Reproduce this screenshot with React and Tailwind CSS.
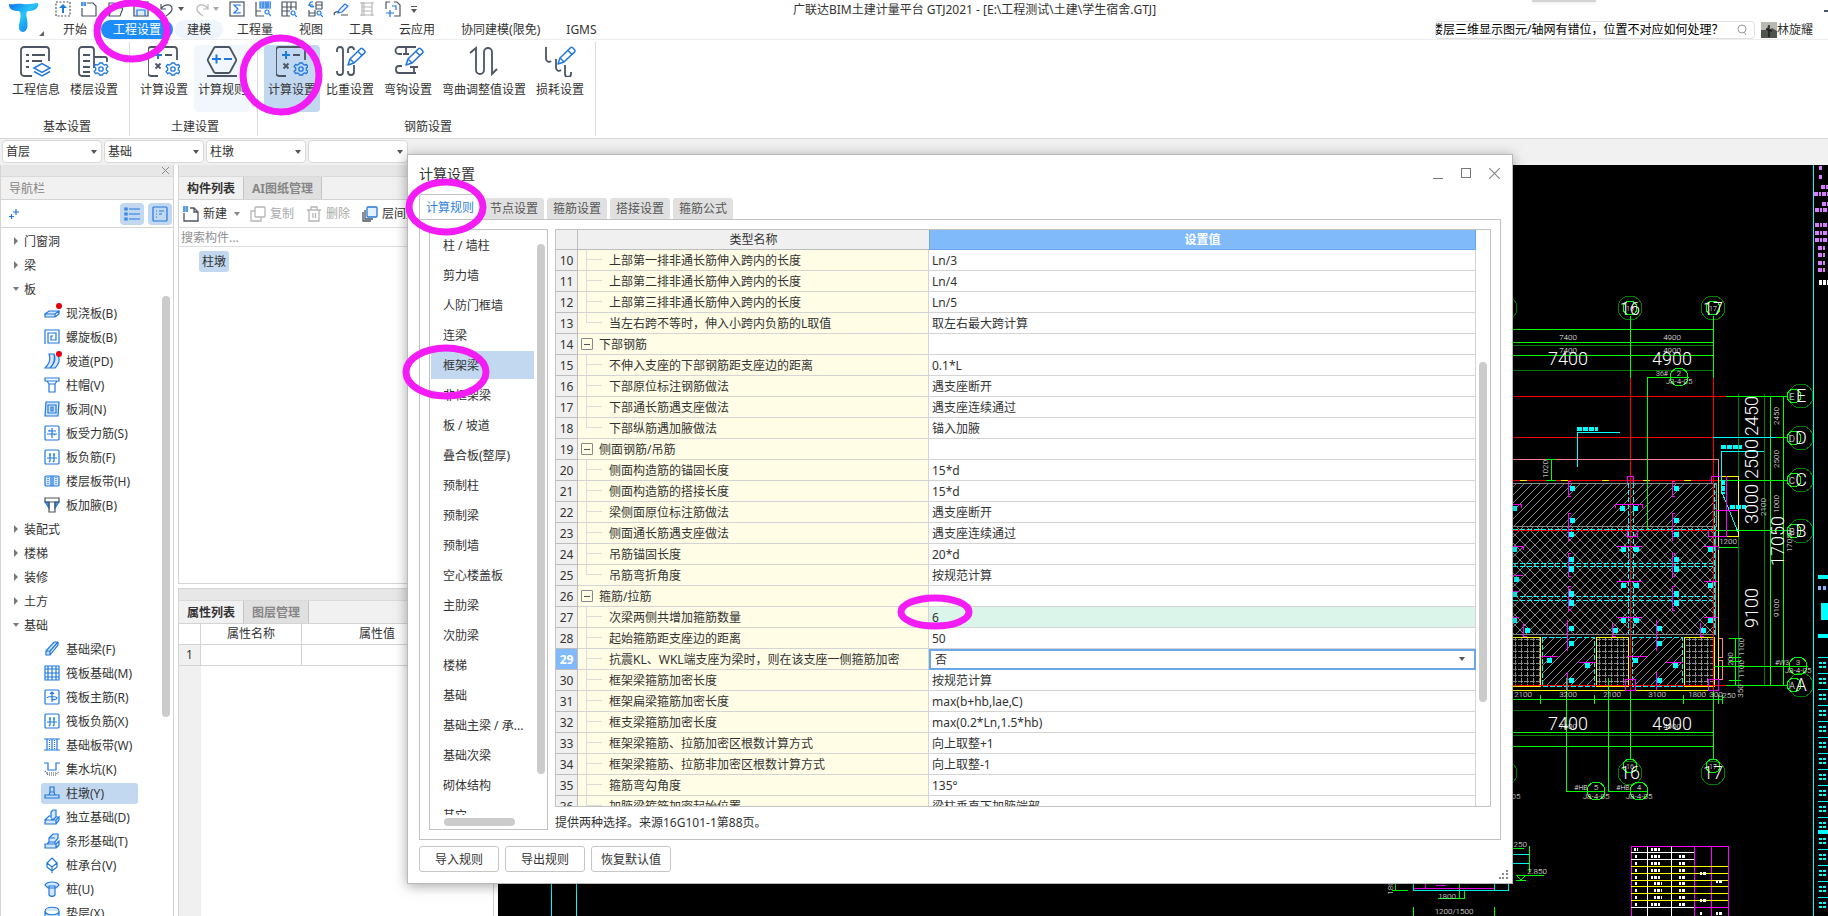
import { useState } from 'react'

const DARK = '#4b5563'
const BLUE = '#1f78e0'

const menuTabs = ['开始', '工程设置', '建模', '工程量', '视图', '工具', '云应用', '协同建模(限免)', 'IGMS']

const ribbonGroups = [
  {
    name: '基本设置',
    items: [
      { label: '工程信息', icon: 'info' },
      { label: '楼层设置', icon: 'floor' },
    ],
  },
  {
    name: '土建设置',
    items: [
      { label: '计算设置', icon: 'calc' },
      { label: '计算规则', icon: 'rule', tone: 'hover' },
    ],
  },
  {
    name: '钢筋设置',
    items: [
      { label: '计算设置', icon: 'calc', tone: 'active' },
      { label: '比重设置', icon: 'weight' },
      { label: '弯钩设置', icon: 'hook' },
      { label: '弯曲调整值设置', icon: 'bend', wide: true },
      { label: '损耗设置', icon: 'loss' },
    ],
  },
]

const navTree = [
  { label: '门窗洞' },
  { label: '梁' },
  {
    label: '板',
    children: [
      { label: '现浇板(B)', icon: 'slab', dot: true },
      { label: '螺旋板(B)', icon: 'spiral' },
      { label: '坡道(PD)', icon: 'ramp', dot: true },
      { label: '柱帽(V)', icon: 'cap' },
      { label: '板洞(N)', icon: 'hole' },
      { label: '板受力筋(S)', icon: 'rebarS' },
      { label: '板负筋(F)', icon: 'rebarF' },
      { label: '楼层板带(H)', icon: 'strip' },
      { label: '板加腋(B)', icon: 'haunch' },
    ],
  },
  { label: '装配式' },
  { label: '楼梯' },
  { label: '装修' },
  { label: '土方' },
  {
    label: '基础',
    children: [
      { label: '基础梁(F)', icon: 'beam' },
      { label: '筏板基础(M)', icon: 'raft' },
      { label: '筏板主筋(R)', icon: 'rebarR' },
      { label: '筏板负筋(X)', icon: 'rebarF' },
      { label: '基础板带(W)', icon: 'stripW' },
      { label: '集水坑(K)', icon: 'sump' },
      { label: '柱墩(Y)', icon: 'pier', selected: true },
      { label: '独立基础(D)', icon: 'isolated' },
      { label: '条形基础(T)', icon: 'footing' },
      { label: '桩承台(V)', icon: 'pilecap' },
      { label: '桩(U)', icon: 'pile' },
      { label: '垫层(X)', icon: 'cushion' },
    ],
  },
]

const categories = [
  '柱 / 墙柱', '剪力墙', '人防门框墙', '连梁', '框架梁', '非框架梁', '板 / 坡道', '叠合板(整厚)', '预制柱', '预制梁',
  '预制墙', '空心楼盖板', '主肋梁', '次肋梁', '楼梯', '基础', '基础主梁 / 承...', '基础次梁', '砌体结构', '其它',
]

const rows = [
  { no: 10, name: '上部第一排非通长筋伸入跨内的长度', value: 'Ln/3' },
  { no: 11, name: '上部第二排非通长筋伸入跨内的长度', value: 'Ln/4' },
  { no: 12, name: '上部第三排非通长筋伸入跨内的长度', value: 'Ln/5' },
  { no: 13, name: '当左右跨不等时，伸入小跨内负筋的L取值', value: '取左右最大跨计算', last: true },
  { no: 14, name: '下部钢筋', group: true },
  { no: 15, name: '不伸入支座的下部钢筋距支座边的距离', value: '0.1*L' },
  { no: 16, name: '下部原位标注钢筋做法', value: '遇支座断开' },
  { no: 17, name: '下部通长筋遇支座做法', value: '遇支座连续通过' },
  { no: 18, name: '下部纵筋遇加腋做法', value: '锚入加腋', last: true },
  { no: 19, name: '侧面钢筋/吊筋', group: true },
  { no: 20, name: '侧面构造筋的锚固长度', value: '15*d' },
  { no: 21, name: '侧面构造筋的搭接长度', value: '15*d' },
  { no: 22, name: '梁侧面原位标注筋做法', value: '遇支座断开' },
  { no: 23, name: '侧面通长筋遇支座做法', value: '遇支座连续通过' },
  { no: 24, name: '吊筋锚固长度', value: '20*d' },
  { no: 25, name: '吊筋弯折角度', value: '按规范计算', last: true },
  { no: 26, name: '箍筋/拉筋', group: true },
  { no: 27, name: '次梁两侧共增加箍筋数量', value: '6', changed: true },
  { no: 28, name: '起始箍筋距支座边的距离', value: '50' },
  { no: 29, name: '抗震KL、WKL端支座为梁时，则在该支座一侧箍筋加密', value: '否', editing: true },
  { no: 30, name: '框架梁箍筋加密长度', value: '按规范计算' },
  { no: 31, name: '框架扁梁箍筋加密长度', value: 'max(b+hb,lae,C)' },
  { no: 32, name: '框支梁箍筋加密长度', value: 'max(0.2*Ln,1.5*hb)' },
  { no: 33, name: '框架梁箍筋、拉筋加密区根数计算方式', value: '向上取整+1' },
  { no: 34, name: '框架梁箍筋、拉筋非加密区根数计算方式', value: '向上取整-1' },
  { no: 35, name: '箍筋弯勾角度', value: '135°' },
  { no: 36, name: '加腋梁箍筋加密起始位置', value: '梁柱垂直下加腋端部' },
]

function Caret({ className = '' }) {
  return (
    <svg width="6" height="4" viewBox="0 0 6 4" className={className}>
      <path d="M0 0h6L3 4z" fill="#555" />
    </svg>
  )
}

function Gear({ x, y }) {
  return (
    <g transform={`translate(${x} ${y})`} stroke={BLUE} strokeWidth="1.3" fill="none" strokeLinejoin="round">
      <path d="M-1.6-6h3.2l.6 1.5 1.6.6 1.5-.8L7-2.4 5.3-1v2L7 2.4 5.3 4.700l-1.500-.8-1.600.6L1.600 6h-3.200l-.6-1.500-1.600-.6-1.500.8L-7 2.400-5.300 1v-2L-7-2.400l1.700-2.300 1.500.8 1.600-.6z" />
      <circle r="2.200" />
    </g>
  )
}

function Pencil({ x, y }) {
  return (
    <g transform={`translate(${x} ${y})`} stroke={BLUE} strokeWidth="1.500" fill="none" strokeLinejoin="round">
      <path d="M0 17l2-6L12.500.8c.6-.6 1.500-.6 2.100 0l2 2c.6.6.6 1.500 0 2.100L6 15z" />
      <path d="M10 3.500l4 4M2 11l4 4" />
    </g>
  )
}

function RibbonIcon({ name }) {
  const frame = 'M12 31H5a3 3 0 0 1-3-3V5a3 3 0 0 1 3-3h23a3 3 0 0 1 3 3v10'
  return (
    <svg width="32" height="32" viewBox="0 0 32 32" fill="none" stroke={DARK} strokeWidth="1.800">
      {name === 'info' && (
        <>
          <path d="M12 31H4a3 3 0 0 1-3-3V5a3 3 0 0 1 3-3h22a3 3 0 0 1 3 3v11" />
          <path d="M6 10h3M12 10h13M6 16h3M12 16h10M6 22h3" />
          <path d="M14 23l8-4.500 8 4.500-8 4.500zM14 26.500l8 4.500 8-4.500" stroke={BLUE} strokeWidth="1.500" />
        </>
      )}
      {name === 'floor' && (
        <>
          <path d="M12 31H4a3 3 0 0 1-3-3V5a3 3 0 0 1 3-3h9a3 3 0 0 1 3 3v18M16 12h11a2 2 0 0 1 2 2v3" />
          <path d="M5 10h7M5 16h7M5 22h7M5 27h7" />
          <Gear x={23} y={24} />
        </>
      )}
      {name === 'calc' && (
        <>
          <path d={frame} transform="translate(-2 0)" />
          <path d="M6 10h8M10 6v8" stroke={BLUE} strokeWidth="2" />
          <path d="M17 10h7M7.500 18.500l5 5M12.500 18.500l-5 5" />
          <Gear x={25} y={24} />
        </>
      )}
      {name === 'rule' && (
        <>
          <path d="M10 2h12a2 2 0 0 1 2 1l6 11a2 2 0 0 1 0 2l-6 11a2 2 0 0 1-2 1H10a2 2 0 0 1-2-1L2 16a2 2 0 0 1 0-2L8 3a2 2 0 0 1 2-1zM1 31h30" />
          <path d="M6 14h9M10.500 9.500v9M18 14h8" stroke={BLUE} strokeWidth="2" />
        </>
      )}
      {name === 'weight' && (
        <>
          <path d="M3 7V5a3 3 0 0 1 6 0v22a3 3 0 0 1-6 0v-1M14 8V5a3 3 0 0 1 6 0M14 26v1a3 3 0 0 0 6 0v-7" />
          <Pencil x={14} y={3} />
        </>
      )}
      {name === 'hook' && (
        <>
          <path d="M24 2H7a3 3 0 0 0 0 7h3M14 3v6M11 9h6M10 21H7a3 3 0 0 0-3 3v1a3 3 0 0 0 3 3h17M22 22v7M18 22h8" />
          <Pencil x={14} y={3} />
        </>
      )}
      {name === 'bend' && <path d="M2 8l6-5v22a4 4 0 0 0 8 0V7a4 4 0 0 1 8 0v22l5-5" />}
      {name === 'loss' && (
        <>
          <path d="M2 2v12a3 3 0 0 0 5 2M12 14v9a3 3 0 0 0 5 2M21 20v9a3 3 0 0 0 6 0v-2" />
          <Pencil x={14} y={2} />
        </>
      )}
    </svg>
  )
}

function TreeIcon({ name }) {
  return (
    <svg width="16" height="16" viewBox="0 0 16 16" fill="none" stroke={BLUE} strokeWidth="1.200">
      {name === 'slab' && <path d="M1 9l4-3h10l-4 3zM1 9v3h10V9M11 12l4-3V6" fill="#d5e6fa" />}
      {name === 'spiral' && <path d="M1 15V1h14v13H4V4h8v7H7V7h2" />}
      {name === 'ramp' && <path d="M5 1c2 5 0 10-4 14h5c4-4 5-9 4-14zM10 1c2 5 0 10-4 14h5c4-4 5-9 3-13" fill="#d5e6fa" />}
      {name === 'cap' && <path d="M1 1h14v3H1zM3 4l2 3h6l2-3M5 7v8h6V7" />}
      {name === 'hole' && <path d="M2 1h13l-1 14H1zM4 4h8v8H4zM7 6h2v4H7z" fill="#d5e6fa" />}
      {name === 'rebarS' && (
        <>
          <rect x="1" y="1" width="14" height="14" rx="1" />
          <path d="M4 6h8M3 9h10M8 3v10M6 5l-1 1M10 9l1 1" />
        </>
      )}
      {name === 'rebarF' && (
        <>
          <rect x="1" y="1" width="14" height="14" rx="1" />
          <path d="M3 9h10M6 4v8l-1 1M10 4v8l-1 1M5 6h2M9 6h2" />
        </>
      )}
      {name === 'rebarR' && (
        <>
          <rect x="1" y="1" width="14" height="14" rx="1" />
          <path d="M3 9c1-2 9-2 10 0-1 2-4 2-5 1M8 3v10M6 5l2-2 2 2" />
        </>
      )}
      {name === 'strip' && (
        <>
          <rect x="1" y="3" width="14" height="10" rx="1" fill="#d5e6fa" />
          <path d="M4 4v8M12 4v8" strokeDasharray="1 1" />
          <path d="M7 3v10M9 3v10" />
        </>
      )}
      {name === 'haunch' && (
        <>
          <path d="M1 5l4 6V5zM15 5l-4 6V5z" fill="#4d95ea" />
          <path d="M1 1h14v4H1zM5 5v10h6V5" stroke={DARK} />
        </>
      )}
      {name === 'beam' && <path d="M2 10L10 1h4v3L6 14H2zM2 10h4v4M6 10l8-9" fill="#d5e6fa" />}
      {name === 'raft' && <path d="M1 1h14v14H1zM4 1v14M8 1v14M12 1v14M1 4h14M1 8h14M1 12h14" />}
      {name === 'stripW' && (
        <>
          <path d="M0 2h16M0 13h16M3 2v11M8 2v11M13 2v11" />
          <path d="M5.500 3v10M10.500 3v10" strokeDasharray="1 1" />
        </>
      )}
      {name === 'sump' && (
        <>
          <path d="M0 2h4v7h8V2h4" />
          <path d="M1 10l3 4h8l3-4M3 12h10" stroke={DARK} strokeDasharray="1 1" />
        </>
      )}
      {name === 'pier' && <path d="M1 10h14v3H1zM5 10l1-3h4l1 3M6 7V2h4v5" />}
      {name === 'isolated' && <path d="M1 11h11v4H1zM1 11l4-4h2M12 11l3-3v3l-3 4M7 9V3l2-2h3v7l-2 2H7M12 8l3 0" fill="#d5e6fa" />}
      {name === 'footing' && <path d="M1 11h11v4H1zM12 11l3-3v4l-3 3M3 11l2-2V5l4-4h5v4l-3 4v2M5 5h6M5 9h6" fill="#d5e6fa" />}
      {name === 'pilecap' && <path d="M8 1l5 5-5 4-5-4zM3 6v4l5 4 5-4V6M8 10v6" />}
      {name === 'pile' && <path d="M1 4c2-4 12-4 14 0l-3 3H4zM5 5h6v9c-2 2-4 2-6 0z" fill="#d5e6fa" />}
      {name === 'cushion' && <path d="M1 6c0-5 14-5 14 0s-14 5-14 0v7c0 5 14 5 14 0V6" fill="#d5e6fa" />}
    </svg>
  )
}

const quickPaths = {
  上传: <><rect x="1" y="1" width="14" height="14" strokeDasharray="2 1.500" /><path d="M8 3L4 7h3v5h2V7h3z" fill={BLUE} stroke="none" /></>,
  新建: <><path d="M6 2h6l3 3v10H1V7" /><path d="M0 2h5M0 4h5M1 1v4M4 1v4" stroke={BLUE} /></>,
  打开: <path d="M2 15V2h5l2 2h5v3M2 15l3-8h11l-3 8z" />,
  保存: <><path d="M1 1h14v14H1z" /><path d="M4 1v4h8V1M4 15V9h8v6" stroke={BLUE} /></>,
  撤销: <path d="M2 3v5h5M2 8c3-5 11-6 11 0 0 4-4 5-6 7" />,
  恢复: <path d="M14 3v5H9M14 8C11 3 3 2 3 8c0 4 4 5 6 7" stroke="#b8b8b8" />,
  汇总: <><rect x="1" y="1" width="14" height="14" /><path d="M11 5V4H5l4 4-4 4h6v-1" stroke={BLUE} /></>,
  查看钢筋: <><path d="M1 1v14h8M1 10h5" /><path d="M5 1h11v6H5zM5 3h11M5 5h11M8 1v6M11 1v6M13 1v6M12 9a2 2 0 1 0 .1 0M14 13l2 2" stroke={BLUE} /></>,
  查看表格: <><path d="M9 15H1V1h14v8M1 6h14M1 10h8M6 1v14M10 1v8" /><path d="M12 10a2 2 0 1 0 .1 0M14 14l2 2" stroke={BLUE} /></>,
  查看工程量: <><path d="M9 1h6v7M9 1v7h6M9 4h6M2 9v6h6M2 12h6M8 9v6" /><path d="M6 1a2.500 2.500 0 1 0 1 4M1 4h5M12 10a2 2 0 1 0 .1 0M14 14l2 2" stroke={BLUE} /></>,
  编辑: <><path d="M2 14c-3-2 2-4 4-3M8 14h7" /><path d="M5 12l1-3 6-6 3 2-6 6z" stroke={BLUE} /></>,
  栅格: <path d="M3 1v14M13 1v14M1 2h14M3 6h10M3 10h10M1 14h14M5 1v14" stroke="#b8b8b8" />,
  提取: <><path d="M1 8V1h4M9 1h3l3 3v11H9" /><path d="M5 9v7M1 12h8M7 5h4v4" stroke={BLUE} /></>,
}

function QuickButton({ name, className = '' }) {
  return (
    <button aria-label={name} className={`h-4 w-4 shrink-0 ${className}`}>
      <svg width="16" height="16" viewBox="0 0 16 16" fill="none" stroke={DARK} strokeWidth="1.200">
        {quickPaths[name]}
      </svg>
    </button>
  )
}

function Header() {
  return (
    <header className="flex h-10 shrink-0 border-b border-[#eeeeee] bg-white">
      <div className="flex w-[51px] shrink-0 items-start pt-[3px] pl-[9px]">
        <svg width="30" height="29" viewBox="0 0 30 29">
          <defs>
            <linearGradient id="logo" x1="0" y1="0" x2="1" y2="1">
              <stop offset="0" stopColor="#0a6ff0" />
              <stop offset=".45" stopColor="#27c6f7" />
              <stop offset="1" stopColor="#0b62ee" />
            </linearGradient>
          </defs>
          <path d="M0 1c4 1 8-1 14 0 6 1 10-1 15-1 1 4-2 8-9 8-3 0-3 3-2 8 1 6 1 12-4 13-6-1-4-7-3-12 1-5 1-9-2-9C3 8 0 6 0 1z" fill="url(#logo)" />
        </svg>
        <svg width="5" height="5" viewBox="0 0 5 5" className="mt-7 shrink-0">
          <path d="M5 0v5H0z" fill="#666" />
        </svg>
      </div>
      <div className="flex min-w-0 flex-1 flex-col">
        <div className="flex h-5 items-start">
          <div className="flex shrink-0 items-center gap-[10px] pt-px pl-1">
            <QuickButton name="上传" />
            <QuickButton name="新建" />
            <QuickButton name="打开" />
            <QuickButton name="保存" className="bg-[#e0ebf9]" />
            <span className="flex w-[25px] items-center justify-between"><QuickButton name="撤销" /><Caret /></span>
            <span className="flex w-[25px] items-center justify-between"><QuickButton name="恢复" /><Caret className="opacity-50" /></span>
            <QuickButton name="汇总" />
            <QuickButton name="查看钢筋" />
            <QuickButton name="查看表格" />
            <QuickButton name="查看工程量" />
            <QuickButton name="编辑" />
            <QuickButton name="栅格" />
            <QuickButton name="提取" />
            <svg width="6" height="7" viewBox="0 0 6 7">
              <path d="M0 0h6v1H0zM0 3h6L3 7z" fill="#555" />
            </svg>
          </div>
          <h1 className="flex-1 text-center leading-5 whitespace-nowrap">广联达BIM土建计量平台 GTJ2021 - [E:\工程测试\土建\学生宿舍.GTJ]</h1>
          <div className="flex h-full w-[296px] items-start justify-between">
            <div className="h-0.5 w-16 bg-[#d4d4d4] shadow" />
            <button aria-label="最小化" className="mt-2.5 h-0.5 w-1 bg-gray-600" />
          </div>
        </div>
        <div className="flex h-[19px] items-center justify-between pr-[15px]">
          <nav className="flex items-center gap-0.5">
            {menuTabs.map((t) => (
              <button
                key={t}
                className={`h-[19px] rounded-full px-3 leading-5 whitespace-nowrap ${
                  t === '工程设置' ? 'bg-[#1b8cfa] text-white' : t === '建模' ? 'bg-[#eff5fd]' : ''
                }`}
              >
                {t}
              </button>
            ))}
          </nav>
          <div className="flex items-center gap-1.5">
            <label className="flex h-[18px] w-80 items-center justify-end overflow-hidden rounded-sm border border-[#e0e0e0] bg-white">
              <input
                aria-label="搜索"
                defaultValue="楼层三维显示图元/轴网有错位，位置不对应如何处理？"
                className="w-[305px] shrink-0 pt-px text-black outline-none"
              />
              <svg width="12" height="12" viewBox="0 0 12 12" className="mr-1.5 shrink-0" fill="none" stroke="#999">
                <circle cx="6" cy="5" r="4" />
                <path d="M8.500 8.500L10 11" />
              </svg>
            </label>
            <div className="flex items-center">
              <svg width="16" height="16" viewBox="0 0 16 16">
                <rect width="16" height="16" fill="#b9b9b4" />
                <path d="M0 8h5l2-4 1 4 3-2 5 3v7H0z" fill="#50544e" />
                <path d="M8 3v12M5 7l6 2" stroke="#1e1e1e" strokeWidth="1.500" />
              </svg>
              <span className="leading-5">林旋耀</span>
            </div>
          </div>
        </div>
      </div>
    </header>
  )
}

function Ribbon() {
  return (
    <section className="flex h-[98px] shrink-0 bg-white pl-0.5">
      {ribbonGroups.map((g) => (
        <div key={g.name} className="my-0.5 flex flex-col items-center border-r border-[#dcdcdc] pr-[7px] pl-1.5">
          <div className="mt-[3px] flex gap-0.5">
            {g.items.map((item) => (
              <button
                key={item.label}
                className={`flex h-[67px] flex-col items-center rounded-sm whitespace-nowrap ${item.wide ? 'w-[92px]' : 'w-14'} ${
                  item.tone === 'active' ? 'bg-[#c1d8f0]' : item.tone === 'hover' ? 'bg-[#f2f7fd]' : ''
                }`}
              >
                <RibbonIcon name={item.icon} />
                <span className="mt-[5px]">{item.label}</span>
              </button>
            ))}
          </div>
          <span className="mt-[7px] pl-1">{g.name}</span>
        </div>
      ))}
    </section>
  )
}

function ComboBar() {
  return (
    <div className="flex h-[27px] shrink-0 items-start gap-0.5 border-t border-[#d6d6d6] bg-[#f1f1f1] pt-px pl-0.5">
      {['首层', '基础', '柱墩', ''].map((v, i) => (
        <div key={i} className="relative">
          <select
            aria-label={['楼层', '类别', '构件类型', '构件'][i]}
            className="h-[23px] w-[100px] appearance-none rounded-sm border border-[#d9d9d9] bg-white pl-[3px] text-xs outline-none"
          >
            <option>{v}</option>
          </select>
          <Caret className="pointer-events-none absolute top-2.5 right-[5px]" />
        </div>
      ))}
    </div>
  )
}

function NavPanel() {
  return (
    <aside className="flex w-[174px] shrink-0 flex-col border-x border-[#d4d4d4] bg-white">
      <div className="flex h-3 items-center justify-end border-b border-[#dadada] bg-[#e7e7e7] pr-1">
        <button aria-label="关闭导航栏">
          <svg width="7" height="7" viewBox="0 0 7 7" stroke="#888"><path d="M0 0l7 7M7 0L0 7" /></svg>
        </button>
      </div>
      <h2 className="h-[23px] border-b border-[#d4d4d4] bg-[#f1f1f1] pl-2 leading-[23px] text-[#858585]">导航栏</h2>
      <div className="flex h-7 items-center gap-1 border-b border-[#d4d4d4] pr-px">
        <button aria-label="新增" className="mr-auto ml-2">
          <svg width="10" height="10" viewBox="0 0 10 10" stroke={BLUE} strokeWidth="1.200"><path d="M4 3h6M7 0v6M0 7.500h5M2.500 5v5" /></svg>
        </button>
        <button aria-label="列表" className="flex h-[22px] w-6 items-center justify-center rounded bg-[#c1d8f0]">
          <svg width="16" height="14" viewBox="0 0 16 14" fill="none" stroke={BLUE} strokeWidth="1.200">
            <path d="M5 2h11M5 7h11M5 12h11M1 1h2v2H1zM1 6h2v2H1zM1 11h2v2H1z" />
          </svg>
        </button>
        <button aria-label="详情" className="flex h-[22px] w-6 items-center justify-center rounded bg-[#c1d8f0]">
          <svg width="16" height="16" viewBox="0 0 16 16" fill="none" stroke={BLUE} strokeWidth="1.200">
            <rect x="1" y="1" width="14" height="14" rx="1" />
            <path d="M4 5h1M7 5h5M4 8h1M7 8h3M4 11h1" />
          </svg>
        </button>
      </div>
      <div className="relative min-h-0 flex-1 overflow-hidden pt-px">
        <ul>
          {navTree.map((n) => (
            <li key={n.label}>
              <div className="flex h-6 items-center pl-3">
                <svg width="6" height="8" viewBox="0 0 6 8" className="mr-[5px]">
                  <path d={n.children ? 'M0 2h6L3 6z' : 'M1 0v8l4-4z'} fill="#777" />
                </svg>
                <span className="pt-0.5">{n.label}</span>
              </div>
              {n.children && (
                <ul>
                  {n.children.map((c) => (
                    <li key={c.label} className="flex h-6 items-center pl-10">
                      <div className={`relative flex h-[21px] w-[97px] items-center gap-1.5 rounded-[3px] pl-[3px] whitespace-nowrap ${c.selected ? 'bg-[#c1d8f0]' : ''}`}>
                        <TreeIcon name={c.icon} />
                        {c.dot && <i className="absolute top-0 left-[15px] h-1.5 w-1.5 rounded-full bg-red-600" />}
                        <span className="pt-0.5">{c.label}</span>
                      </div>
                    </li>
                  ))}
                </ul>
              )}
            </li>
          ))}
        </ul>
        <div className="absolute top-[68px] right-[3px] h-[421px] w-2 rounded-full bg-[#cbcbcb]" />
      </div>
    </aside>
  )
}

function PanelTabs({ tabs }) {
  return (
    <div className="flex h-[23px] border-b border-[#d4d4d4] bg-[#f1f1f1] font-bold">
      {tabs.map((t, i) => (
        <button key={t} className={`border-r border-[#c4c4c4] px-2 leading-[22px] ${i === 0 ? 'text-[#333]' : 'bg-[#e0e0e0] text-[#868686]'}`}>
          <span className="block pt-px">{t}</span>
        </button>
      ))}
    </div>
  )
}

function ComponentPanel() {
  return (
    <div className="flex w-[316px] shrink-0 flex-col">
      <section className="flex h-[419px] flex-col border border-t-0 border-[#d4d4d4] bg-white">
        <div className="h-3 border-b border-[#dadada] bg-[#e7e7e7]" />
        <PanelTabs tabs={['构件列表', 'AI图纸管理']} />
        <div className="flex h-7 items-center overflow-hidden border-b border-[#dedede] pl-1 whitespace-nowrap">
          <button className="flex items-center gap-1">
            <svg width="16" height="16" viewBox="0 0 16 16" fill="none" stroke={DARK} strokeWidth="1.300">
              <path d="M7 2h4l4 4v9H1V7M11 2v4h4" />
              <path d="M0 1h5M0 3h5M0 5h5M1 0v6M4 0v6" stroke={BLUE} strokeWidth="1" />
            </svg>
            <span className="pt-px">新建</span>
          </button>
          <Caret className="ml-[7px] opacity-70" />
          <button disabled className="ml-[10px] flex items-center gap-1 text-[#aaa]">
            <svg width="16" height="16" viewBox="0 0 16 16" fill="none" stroke="#b5b5b5" strokeWidth="1.300">
              <rect x="5" y="1" width="10" height="10" rx="1" />
              <path d="M5 5H1v10h10v-4" />
            </svg>
            <span className="pt-px">复制</span>
          </button>
          <button disabled className="ml-3 flex items-center gap-1 text-[#aaa]">
            <svg width="16" height="16" viewBox="0 0 16 16" fill="none" stroke="#b5b5b5" strokeWidth="1.300">
              <path d="M1 4h14M5 4V1h6v3M3 4v11h10V4M7 7v5M9.500 7v5" />
            </svg>
            <span className="pt-px">删除</span>
          </button>
          <button className="ml-3 flex items-center gap-1">
            <svg width="16" height="16" viewBox="0 0 16 16" fill="none" stroke={DARK} strokeWidth="1.300">
              <path d="M3 4v9h8M1 6v9h8" />
              <rect x="5" y="1" width="10" height="10" rx="1" stroke={BLUE} fill="#e6f0fc" />
            </svg>
            <span className="pt-px">层间复制</span>
          </button>
        </div>
        <input aria-label="搜索构件" placeholder="搜索构件..." className="h-[19px] border-b border-[#dedede] pl-0.5 outline-none placeholder:text-[#8f8f8f]" />
        <div className="pt-1 pl-5">
          <button className="h-[21px] rounded-[3px] bg-[#c1d8f0] px-[3px]">柱墩</button>
        </div>
      </section>
      <section className="mt-1 flex flex-1 flex-col border border-b-0 border-[#d4d4d4] bg-white">
        <div className="h-3 border-b border-[#dadada] bg-[#e7e7e7]" />
        <PanelTabs tabs={['属性列表', '图层管理']} />
        <table className="w-full table-fixed border-separate border-spacing-0">
          <thead>
            <tr className="[&>th]:h-[21px] [&>th]:border-r [&>th]:border-b [&>th]:border-[#d4d4d4] [&>th]:p-0 [&>th]:font-normal">
              <th className="w-[22px]" />
              <th className="w-[101px]">属性名称</th>
              <th>属性值</th>
              <th className="w-10">附加</th>
            </tr>
          </thead>
          <tbody>
            <tr className="[&>td]:h-[21px] [&>td]:border-r [&>td]:border-b [&>td]:border-[#d4d4d4] [&>td]:p-0">
              <td className="bg-[#f0f0f0] text-center">1</td>
              <td />
              <td />
              <td />
            </tr>
          </tbody>
        </table>
        <div className="w-[22px] flex-1 bg-[#f0f0f0]" />
      </section>
    </div>
  )
}

// [x, y, text, size, rotate]
const cadTexts = [
  [1568, 340, '7400', 8], [1672, 340, '4900', 8], [1568, 353, '7400', 8], [1672, 353, '4900', 8],
  [1568, 365, '7400', 18], [1672, 365, '4900', 18], [1568, 730, '7400', 18], [1672, 730, '4900', 18],
  [1568, 729, '7400', 8], [1672, 729, '4900', 8],
  [1630, 315, '16', 18], [1713, 315, '17', 18], [1630, 779, '16', 18], [1713, 779, '17', 18],
  [1630, 311, '16', 7], [1713, 311, '17', 7], [1630, 769, '16', 7], [1713, 769, '17', 7],
  [1679, 376, '2', 8], [1679, 384, 'J8-4-05', 8], [1662, 376, '36#', 7],
  [1596, 790, '5', 8], [1596, 799, 'J8-4-05', 8], [1581, 790, '#HB', 7],
  [1639, 790, '4', 8], [1639, 799, 'J8-4-05', 8], [1623, 790, '#HB', 7], [1516, 799, '05', 8],
  [1798, 665, '3', 8], [1798, 673, 'J8-4-05', 8], [1782, 665, '#W3', 7],
  [1758, 416, '2450', 18, 1], [1758, 459, '2500', 18, 1], [1758, 504, '3000', 18, 1],
  [1784, 541, '17050', 18, 1], [1758, 608, '9100', 18, 1],
  [1779, 416, '2450', 8, 1], [1779, 459, '2500', 8, 1], [1779, 504, '1000', 8, 1], [1766, 507, '2100', 8, 1],
  [1779, 608, '9100', 8, 1], [1792, 541, '17050', 8, 1], [1548, 469, '1020', 8, 1],
  [1744, 647, '1100', 8, 1], [1733, 659, '200', 8, 1], [1744, 669, '1100', 8, 1], [1743, 691, '350', 8, 1],
  [1728, 544, '1200', 8], [1523, 697, '2100', 8], [1568, 697, '3200', 8], [1612, 697, '2100', 8],
  [1657, 697, '3100', 8], [1697, 697, '1800', 8], [1716, 697, '300', 8], [1729, 698, '250', 8],
  [1518, 847, '1250', 8], [1537, 874, '2.850', 8], [1447, 899, '1800', 8], [1454, 914, '1200/1500', 8],
  [1393, 888, '180', 8, 1],
]

const axes = [['E', 396], ['D', 438], ['C', 480], ['B', 531], ['A', 685]]

const blobs = [
  [1572, 488], [1676, 488], [1572, 520], [1676, 520], [1622, 508], [1635, 508], [1514, 508],
  [1571, 534], [1676, 534], [1623, 549], [1636, 549], [1710, 549], [1514, 549],
  [1571, 559], [1676, 559], [1571, 569], [1676, 569], [1516, 579], [1623, 585], [1636, 585], [1710, 585],
  [1571, 593], [1676, 593], [1571, 603], [1676, 603], [1514, 594], [1623, 620], [1636, 620], [1710, 620], [1514, 620],
  [1527, 630], [1571, 628], [1615, 630], [1659, 628], [1703, 630], [1571, 643], [1659, 643],
  [1549, 660], [1587, 665], [1635, 660], [1675, 665], [1571, 680], [1659, 680],
]

const purpleNotes = [[1819, 166, 3], [1819, 175, 3], [1821, 185, 7], [1814, 192, 14], [1822, 202, 6], [1815, 208, 13], [1815, 223, 13], [1815, 231, 13], [1815, 238, 12], [1818, 246, 7], [1818, 253, 7], [1818, 261, 7], [1818, 268, 7]]

function Cad() {
  const notes = Array.from({ length: 16 }, (_, i) => 657 + i * 16)
  return (
    <svg
      viewBox="498 165 1330 751"
      preserveAspectRatio="xMaxYMin slice"
      className="h-full w-full bg-black"
      fill="none"
      strokeWidth="1"
      shapeRendering="crispEdges"
      role="img"
      aria-label="结构平面图"
    >
      <defs>
        <pattern id="diag" width="8" height="8" patternUnits="userSpaceOnUse">
          <path d="M0 8L8 0" stroke="#8a8a8a" />
        </pattern>
        <pattern id="cross" width="10" height="10" patternUnits="userSpaceOnUse">
          <path d="M0 10L10 0M0 0l10 10" stroke="#8a8a8a" />
        </pattern>
        <pattern id="grid" width="6" height="6" patternUnits="userSpaceOnUse">
          <path d="M0 3h5M3 0v5" stroke="#8a8a8a" />
        </pattern>
      </defs>

      <rect x="1500" y="483" width="216" height="43" fill="url(#diag)" stroke="#8a8a8a" />
      <rect x="1500" y="526" width="215" height="108" fill="url(#cross)" stroke="#8a8a8a" />
      <rect x="1508" y="637" width="32" height="49" fill="url(#grid)" stroke="#ff0" />
      <rect x="1596" y="637" width="32" height="49" fill="url(#grid)" stroke="#ff0" />
      <rect x="1684" y="637" width="30" height="49" fill="url(#grid)" stroke="#ff0" />
      <g stroke="#0ff" strokeDasharray="5 2">
        <rect x="1542" y="637" width="52" height="49" fill="url(#diag)" />
        <rect x="1632" y="637" width="50" height="49" fill="url(#diag)" />
        <path d="M1513 529h203M1513 563h203M1513 566h203M1513 596h203M1513 600h203M1628 483v151M1633 483v151M1714 483v151" />
      </g>

      <path d="M1513 345.500h200M1513 370.500h200M1738.500 394v291M1764.500 394v291M1513 710.500h200M1513 735.500h200" stroke="#008000" />
      <g stroke="#008000">
        {[[1505, 308], [1630, 308], [1713, 308], [1505, 773], [1630, 773], [1713, 773]].map(([x, y]) => (
          <circle key={`${x}-${y}`} cx={x} cy={y} r="12" />
        ))}
        {axes.map(([n, y]) => <circle key={n} cx="1801" cy={y} r="12" />)}
      </g>

      <path
        stroke="#f00"
        d="M1630.500 378v312M1713.500 378v312M1513 396.500h213M1513 437.500h200M1513 480.500h207M1513 530.500h210M1513 685.500h213"
      />
      <path d="M1520 480.500h200" stroke="#ff0" strokeDasharray="7 34" />
      <path d="M1513 459.500h205.500v21M1718 638.500h4.500v19h-4.500M1718 660.500h4.500v19h-4.500" stroke="#ff8296" />
      <path d="M1718.500 476.500h20v60h-20zM1718.500 536v154M1513 690.500h203" stroke="#ff0" />
      <path
        stroke="#0f0"
        d="M1630.500 316v62M1713.500 316v62M1513 329.500h200M1513 342.500h200M1513 355.500h200M1647.500 530V377.500h41
          M1726 396.500h61M1776 437.500h11M1720 480.500h67M1716 530.500h71M1726 685.500h61M1770.500 396v290M1783.500 396v290
          M1551.500 460v20M1546 459.500h10M1546 480.500h10M1735.500 638v48M1729 638.500h12M1729 657.500h12M1729 661.500h12M1729 680.500h12
          M1714 666.500h94M1718 547.500h20M1513 699.500h210M1540.500 695v9M1594.500 695v9M1630.500 690v70M1683.500 695v9M1713.500 690v70M1718.500 695v9M1722.500 695v9
          M1513 732.500h200M1513 746.500h200M1566.500 678v113.500h38M1608.500 678v113.500h38
          M1513 848.500h11M1529.500 846v26M1516 875.500h28M1516 875l5 5 5-5M1516 880.500h10
          M1392 890.500h16M1395.500 884v6M1438 898.500h26.500v-8M1413.500 907v9M1494.500 907v9M1459.500 884v14"
      />
      <g stroke="#0f0">
        {[[1679, 377], [1596, 791], [1639, 791], [1798, 666]].map(([x, y]) => <circle key={`${x}-${y}`} cx={x} cy={y} r="9" />)}
        {[[1630, 308], [1713, 308], [1630, 766], [1713, 766]].map(([x, y]) => <circle key={`${x}-${y}`} cx={x} cy={y} r="7" />)}
        {axes.map(([n, y]) => <circle key={n} cx="1794" cy={y} r="7" />)}
      </g>

      <path
        stroke="#0ff"
        d="M1813.500 165v751M1713 437.500h63M1577.500 467v-34.500h42M1721.500 490v-38.500h42M1721 490l17 42M1513 854.500h16M1513 863.500h16
          M1413.500 884v6.500h95V884M1494.500 884v6M551.500 884v32M576.500 884v32"
      />
      <path d="M1577 429h21M1721 447h21M1730 507h16M1723 480v14" stroke="#0ff" strokeWidth="4" strokeDasharray="5 1" />
      <path
        stroke="#f0f"
        d="M1627.500 483v-6.500h6v6M1711.500 483v-6.500h9M1726.500 476v60M1716 510.500h22M1627 530v6.500h10V530M1708 530v6.500h19
          M1571 481.500h-2.500v15h2.500M1675 481.500h-2.500v15h2.500M1571 513.500h-2.500v27.500M1675 513.500h-2.500v27.500
          M1615.500 508v-3.500h27v3.500M1513 504.500h8v3M1617 546.500h25M1704 546.500h14v3M1617 581.500h25M1704 581.500h14M1617 617.500h25M1704 617.500h14
          M1513 546.500h10.500v3M1513 575.500h10M1513 591.500h6M1513 617.500h6
          M1571 553.500h-2.500v23h2.500M1675 553.500h-2.500v23h2.500M1571 586.500h-2.500v24h2.500M1675 586.500h-2.500v24h2.500
          M1567.500 620v31M1656.500 620v31M1567.500 672v18M1656.500 672v18M1523.500 623v13.500h3M1612.500 623v13.500h3M1700.500 623v13.500h3
          M1541 656.500h17M1579 662.500h17M1627 656.500h20M1666 662.500h17M1414 888.500h80M1425.500 884v4M1436 885.500h10"
      />
      <path d="M1625.500 679.500h10v11h-10zM1708.500 679.500h10v11h-10z" stroke="#f0f" />
      {blobs.map(([x, y]) => <rect key={`${x}-${y}`} x={x - 2} y={y - 2} width="5" height="5" fill="#0ff" />)}

      {/* column schedule */}
      <path d="M1631.500 846.500h97V916M1631.500 846v70M1694.500 846v70M1711.500 846v70M1694 907.500h34" stroke="#f0f" />
      <path d="M1647.500 846v70M1671.500 846v70M1631 852.500h63M1631 859.500h63M1631 907.500h63" stroke="#fff" />
      <path d="M1631 866.500h97M1631 873.500h97M1631 880.500h97M1631 886.500h97M1631 893.500h97M1631 900.500h97" stroke="#ff0" />
      <path d="M1634 849.500h4M1635 856.500h2M1635 863.500h2M1635 870.500h2M1635 877.500h2M1635 883.500h2M1635 890.500h2M1635 897.500h2M1635 904.500h2" stroke="#fff" strokeWidth="3" strokeDasharray="2 1" />
      <path d="M1651 849.500h10M1651 856.500h10M1679 856.500h7M1651 863.500h10M1679 863.500h7M1651 870.500h10M1679 870.500h7M1651 877.500h10M1679 877.500h7M1654 883.500h8M1679 883.500h7M1654 890.500h8M1679 890.500h7M1654 897.500h8M1679 897.500h7M1651 904.500h10M1679 904.500h7M1700 873.500h6M1716 881.500h6M1700 900h6M1716 913.500h6M1700 913.500h3" stroke="#fff" strokeWidth="3" strokeDasharray="2 1 3 1" />

      {/* notes running down the sheet border */}
      {purpleNotes.map(([x, y, w]) => (
        <path key={y} d={`M${x} ${y + 2}h${w}`} stroke="#d77cff" strokeWidth="4" strokeDasharray="4 1 2 1" />
      ))}
      <path d="M1819 282h9" stroke="#fff" strokeWidth="5" strokeDasharray="3 1" />
      <path d="M1818 577h10M1821 612h7M1818 635.500h10M1818 832h10" stroke="#0ff" strokeWidth="4" />
      <path d="M1824.500 603v17" stroke="#0ff" strokeWidth="7" />
      <path d="M1818 588h10" stroke="#7db8ff" strokeWidth="4" strokeDasharray="3 2" />
      {notes.map((y) => (
        <g key={y} stroke="#0ff">
          <path d={`M1818 ${y}.5h10`} />
          <path d={`M1819 ${y + 6}h7M1819 ${y + 10}h8`} strokeWidth="2" strokeDasharray="3 1" />
        </g>
      ))}

      <g fill="#fff" fontFamily="Roboto, 'Noto Sans', sans-serif" fontWeight="300" textAnchor="middle">
        {cadTexts.map(([x, y, t, size, rot], i) => (
          <text key={i} x={x} y={y} fontSize={size} transform={rot ? `rotate(-90 ${x} ${y})` : undefined}>{t}</text>
        ))}
        {axes.map(([n, y]) => (
          <g key={n}>
            <text x="1801" y={y + 6} fontSize="18">{n}</text>
            <text x="1792" y={y + 4} fontSize="9">{n}</text>
          </g>
        ))}
      </g>
    </svg>
  )
}

function SettingsTable() {
  return (
    <div className="flex min-h-0 flex-1 overflow-hidden border border-[#c3c3c3]">
      <table className="w-full table-fixed border-separate border-spacing-0 self-start">
        <thead>
          <tr className="h-5">
            <th className="w-[22px] border-r border-b border-[#bdbdbd] bg-[#f0f0f0] p-0" />
            <th className="w-[351px] border-b border-[#bdbdbd] bg-[#f0f0f0] p-0 pt-px leading-[18px] font-normal">类型名称</th>
            <th className="border border-t-0 border-[#6aa6e8] bg-[#80bafa] p-0 pt-px leading-[18px] font-bold text-white">设置值</th>
          </tr>
        </thead>
        <tbody>
          {rows.map((r) => (
            <tr key={r.no}>
              <td className={`h-[21px] border-r border-b border-[#bdbdbd] p-0 pt-0.5 text-center leading-[18px] ${r.editing ? 'bg-[#80bafa] font-bold text-white' : 'bg-[#f0f0f0]'}`}>
                {r.no}
              </td>
              <td className="border-r border-b border-[#d4d4d4] bg-[#fffde6] p-0">
                {r.group ? (
                  <div className="flex h-5 items-center gap-1.5 pl-[3px]">
                    <button aria-label="折叠" className="flex h-3 w-3 items-center justify-center rounded-[1px] border border-[#888]">
                      <span className="h-px w-1.5 bg-[#555]" />
                    </button>
                    <span className="pt-0.5">{r.name}</span>
                  </div>
                ) : (
                  <div className="flex h-5 items-center pl-2 whitespace-nowrap">
                    <span className="mr-[7px] flex w-4 flex-col">
                      <span className="h-2.5 border-b border-l border-[#dcdcdc]" />
                      <span className={`h-2.5 ${r.last ? '' : 'border-l border-[#dcdcdc]'}`} />
                    </span>
                    <span className="pt-0.5">{r.name}</span>
                  </div>
                )}
              </td>
              {r.editing ? (
                <td className="relative p-0">
                  <select aria-label={r.name} className="block h-[21px] w-full appearance-none border-2 border-[#6aa6e8] bg-white pt-px pl-1 text-xs outline-none">
                    <option>否</option>
                    <option>是</option>
                  </select>
                  <Caret className="pointer-events-none absolute top-2 right-[11px]" />
                </td>
              ) : (
                <td className={`border-r border-b border-[#d4d4d4] p-0 pt-0.5 pl-[3px] leading-[18px] ${r.changed ? 'bg-[#dcf5ea]' : 'bg-white'}`}>{r.value}</td>
              )}
            </tr>
          ))}
        </tbody>
      </table>
      <div className="w-[14px] shrink-0 pt-[132px] pl-[3px]">
        <div className="h-[340px] w-2 rounded-full bg-[#cbcbcb]" />
      </div>
    </div>
  )
}

function SettingsDialog() {
  const [active, setActive] = useState('框架梁')
  const tabs = ['计算规则', '节点设置', '箍筋设置', '搭接设置', '箍筋公式']
  return (
    <div
      role="dialog"
      aria-label="计算设置"
      className="absolute top-[154px] right-[315px] bottom-8 left-[407px] flex flex-col border border-[#b9b9b9] bg-white px-[11px] pb-[11px] shadow-[0_2px_12px_rgba(0,0,0,0.35)]"
    >
      <div className="flex h-[39px] shrink-0 items-center justify-between pr-px">
        <h2 className="pb-0.5 text-sm">计算设置</h2>
        <div className="flex items-center gap-[18px] pb-[3px]">
          <button aria-label="最小化" className="h-3 w-2.5 border-b border-[#777]" />
          <button aria-label="最大化" className="h-2.5 w-2.5 border border-[#777]" />
          <button aria-label="关闭">
            <svg width="11" height="11" viewBox="0 0 11 11" stroke="#888" strokeWidth="1.200"><path d="M0 0l11 11M11 0L0 11" /></svg>
          </button>
        </div>
      </div>
      <div className="flex shrink-0 items-end gap-[3px]">
        {tabs.map((t, i) => (
          <button
            key={t}
            className={
              i === 0
                ? 'h-[25px] w-[62px] rounded-t-[3px] border border-b-0 border-[#c3c3c3] bg-white pt-0.5 text-[#2f7fe0]'
                : 'h-[21px] w-[60px] rounded-t-[3px] bg-[#e0e0e0] text-[#555]'
            }
          >
            {t}
          </button>
        ))}
      </div>
      <div className="flex min-h-0 flex-1 gap-[7px] border border-[#c3c3c3] p-[9px]">
        <div className="relative w-[119px] shrink-0 border border-[#c3c3c3] pb-[14px]">
          <ul className="h-full overflow-hidden pt-px pl-px">
            {categories.map((c) => (
              <li key={c} className="h-[30px] w-[103px]">
                <button
                  onClick={() => setActive(c)}
                  className={`h-7 w-full pt-0.5 pl-3 text-left whitespace-nowrap ${c === active ? 'bg-[#c1d8f0]' : ''}`}
                >
                  {c}
                </button>
              </li>
            ))}
          </ul>
          <div className="absolute top-[14px] right-0.5 h-[530px] w-2 rounded-full bg-[#cbcbcb]" />
          <div className="absolute bottom-[3px] left-[14px] h-2 w-[71px] rounded-full bg-[#cbcbcb]" />
        </div>
        <div className="flex min-w-0 flex-1 flex-col">
          <SettingsTable />
          <p className="h-[23px] shrink-0 pt-2 leading-4">提供两种选择。来源16G101-1第88页。</p>
        </div>
      </div>
      <div className="mt-1.5 flex shrink-0 gap-1.5">
        {['导入规则', '导出规则', '恢复默认值'].map((b) => (
          <button key={b} className="h-[26px] w-20 rounded-[3px] border border-[#c6c6c6] bg-white pt-0.5">
            {b}
          </button>
        ))}
      </div>
      <svg width="9" height="9" viewBox="0 0 9 9" className="absolute right-1 bottom-1" fill="#888">
        <path d="M0 7h2v2H0zM3 7h2v2H3zM7 7h2v2H7zM3 3h2v2H3zM7 3h2v2H7zM7 0h2v2H7z" />
      </svg>
    </div>
  )
}

// hand-drawn highlight rings: cx, cy, rx, ry
const rings = [
  [132, 31, 35, 28],
  [281, 75, 38, 37],
  [446, 207, 37, 25],
  [446, 372, 40, 24],
  [935, 612, 34, 14],
]

export default function App() {
  return (
    <div className="relative flex h-screen w-full flex-col overflow-hidden bg-white font-['Noto_Sans','Noto_Sans_CJK_SC',sans-serif] text-xs text-[#333]">
      <Header />
      <Ribbon />
      <ComboBar />
      <main className="flex min-h-0 flex-1 gap-1">
        <NavPanel />
        <ComponentPanel />
        <div className="min-w-0 flex-1 overflow-hidden bg-black">
          <Cad />
        </div>
      </main>
      <SettingsDialog />
      <svg className="pointer-events-none absolute inset-0 h-full w-full" fill="none" stroke="#f41cf4" strokeWidth="7">
        {rings.map(([cx, cy, rx, ry]) => (
          <ellipse key={`${cx}-${cy}`} cx={cx} cy={cy} rx={rx} ry={ry} />
        ))}
      </svg>
    </div>
  )
}
